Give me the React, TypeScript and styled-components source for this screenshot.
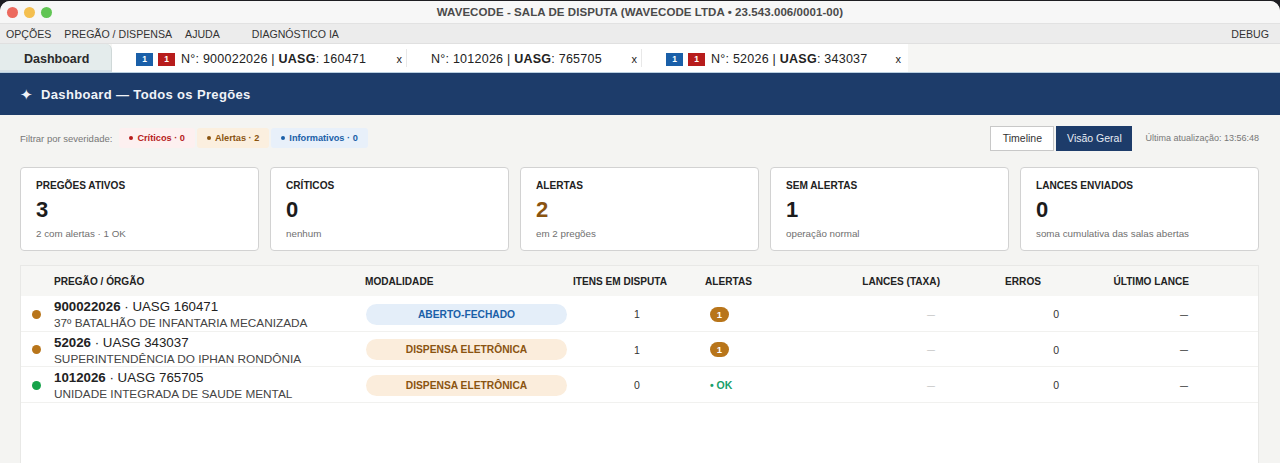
import React from "react";
import styled, { createGlobalStyle } from "styled-components";

const GlobalStyle = createGlobalStyle`
	* {
		box-sizing: border-box;
	}
	html, body {
		margin: 0;
		padding: 0;
		height: 463px;
		overflow: hidden;
		background: #1e1e22;
		font-family: "Liberation Sans", Arial, sans-serif;
	}
`;

const cards = [
	{ title: "PREGÕES ATIVOS", value: "3", note: "2 com alertas · 1 OK" },
	{ title: "CRÍTICOS", value: "0", note: "nenhum" },
	{ title: "ALERTAS", value: "2", note: "em 2 pregões", warn: true },
	{ title: "SEM ALERTAS", value: "1", note: "operação normal" },
	{ title: "LANCES ENVIADOS", value: "0", note: "soma cumulativa das salas abertas" },
];

const rows = [
	{ id: "900022026", uasg: "160471", org: "37º BATALHÃO DE INFANTARIA MECANIZADA", mod: "ABERTO-FECHADO", blue: true, itens: "1", alert: true },
	{ id: "52026", uasg: "343037", org: "SUPERINTENDÊNCIA DO IPHAN RONDÔNIA", mod: "DISPENSA ELETRÔNICA", itens: "1", alert: true },
	{ id: "1012026", uasg: "765705", org: "UNIDADE INTEGRADA DE SAUDE MENTAL", mod: "DISPENSA ELETRÔNICA", itens: "0", alert: false },
];

const App = () => {
	return (
		<Window>
			<GlobalStyle />
			<TitleBar>
				<Lights>
					<Light $color="#ec6a5e" />
					<Light $color="#f4bf4f" />
					<Light $color="#61c554" />
				</Lights>
				WAVECODE - SALA DE DISPUTA (WAVECODE LTDA • 23.543.006/0001-00)
			</TitleBar>
			<MenuBar>
				<MenuItem>OPÇÕES</MenuItem>
				<MenuItem>PREGÃO / DISPENSA</MenuItem>
				<MenuItem>AJUDA</MenuItem>
				<MenuItem $gap={19}>DIAGNÓSTICO IA</MenuItem>
				<MenuItem $right>DEBUG</MenuItem>
			</MenuBar>
			<TabBar>
				<DashTab>Dashboard</DashTab>
				<Tab $width={295}>
					<Flag $color="#1a5fa8">1</Flag>
					<Flag $color="#b71c1c">1</Flag>
					<TabText>N°: 900022026 | <b>UASG</b>: 160471</TabText>
					<Close>x</Close>
				</Tab>
				<Tab $width={235}>
					<TabText>N°: 1012026 | <b>UASG</b>: 765705</TabText>
					<Close>x</Close>
				</Tab>
				<Tab $width={266} $last>
					<Flag $color="#1a5fa8">1</Flag>
					<Flag $color="#b71c1c">1</Flag>
					<TabText>N°: 52026 | <b>UASG</b>: 343037</TabText>
					<Close $last>x</Close>
				</Tab>
			</TabBar>
			<Banner>
				<span>✦</span>
				Dashboard — Todos os Pregões
			</Banner>
			<Content>
				<FilterRow>
					<FilterLabel>Filtrar por severidade:</FilterLabel>
					<Chip $bg="#fdf0f0" $color="#b71c1c">Críticos · 0</Chip>
					<Chip $bg="#fbefdf" $color="#8a5410">Alertas · 2</Chip>
					<Chip $bg="#e8f0fa" $color="#1a5fa8">Informativos · 0</Chip>
					<Spacer />
					<ViewButton>Timeline</ViewButton>
					<ViewButton $active>Visão Geral</ViewButton>
					<Updated>Última atualização: 13:56:48</Updated>
				</FilterRow>
				<Cards>
					{cards.map((c) => (
						<Card key={c.title}>
							<CardTitle>{c.title}</CardTitle>
							<CardValue $warn={c.warn}>{c.value}</CardValue>
							<CardNote>{c.note}</CardNote>
						</Card>
					))}
				</Cards>
				<Table>
					<HeadRow>
						<span />
						<HeadCell>PREGÃO / ÓRGÃO</HeadCell>
						<HeadCell>MODALIDADE</HeadCell>
						<HeadCell>ITENS EM DISPUTA</HeadCell>
						<HeadCell>ALERTAS</HeadCell>
						<HeadCell $right>LANCES (TAXA)</HeadCell>
						<HeadCell $right $pad={19}>ERROS</HeadCell>
						<HeadCell $right $pad={69}>ÚLTIMO LANCE</HeadCell>
					</HeadRow>
					{rows.map((r) => (
						<Row key={r.id}>
							<DotCell>
								<Dot $color={r.alert ? "#b8751a" : "#16a34a"} />
							</DotCell>
							<Name>
								<NameTop><b>{r.id}</b> · UASG {r.uasg}</NameTop>
								<Org>{r.org}</Org>
							</Name>
							<PillCell>
								<Pill $blue={r.blue}>{r.mod}</Pill>
							</PillCell>
							<Itens>{r.itens}</Itens>
							<AlertCell>
								{r.alert ? <AlertBadge>1</AlertBadge> : <OkLabel>• OK</OkLabel>}
							</AlertCell>
							<Rate>—</Rate>
							<Errors>0</Errors>
							<LastBid>—</LastBid>
						</Row>
					))}
				</Table>
			</Content>
		</Window>
	);
};

export default App;

const columns = "33px 311px 208px 132px 100px 135px 120px 1fr";

const Window = styled.div`
	width: 1280px;
	height: 462px;
	margin-top: 1px;
	border-radius: 10px 10px 0 0;
	overflow: hidden;
	background: #f4f4f2;
	display: flex;
	flex-direction: column;
`;

const TitleBar = styled.div`
	position: relative;
	height: 23px;
	flex: none;
	background: #f7f7f7;
	border-bottom: 1px solid #e2e2e2;
	display: flex;
	align-items: center;
	justify-content: center;
	font-size: 11.5px;
	font-weight: bold;
	letter-spacing: 0.07px;
	color: #4a4a4a;
`;

const Lights = styled.div`
	position: absolute;
	left: 7px;
	top: 6px;
	display: flex;
	gap: 6px;
`;

const Light = styled.i<{ $color: string }>`
	width: 11px;
	height: 11px;
	border-radius: 50%;
	background: ${(p) => p.$color};
`;

const MenuBar = styled.div`
	height: 20px;
	flex: none;
	padding: 0 11px 0 6px;
	background: #ececec;
	border-bottom: 1px solid #e0e0e0;
	display: flex;
	align-items: center;
	gap: 13px;
	font-size: 10.6px;
	color: #333;
`;

const MenuItem = styled.div<{ $gap?: number; $right?: boolean }>`
	margin-left: ${(p) => (p.$right ? "auto" : `${p.$gap ?? 0}px`)};
`;

const TabBar = styled.div`
	height: 28px;
	flex: none;
	background: #f6f6f4;
	display: flex;
	align-items: stretch;
`;

const DashTab = styled.div`
	width: 112px;
	border-right: 1px solid #cfd8d8;
	border-radius: 0 6px 0 0;
	background: #e4ecec;
	display: flex;
	align-items: center;
	padding: 3px 0 0 24px;
	font-size: 12.5px;
	font-weight: bold;
	color: #2a2a2a;
	border-bottom: 2px solid #d5e0e6;
`;

const Tab = styled.div<{ $width: number; $last?: boolean }>`
	width: ${(p) => p.$width}px;
	padding: 2px 0 0 24px;
	background: #fff;
	display: flex;
	align-items: center;
	position: relative;
	&::after {
		content: "";
		display: ${(p) => (p.$last ? "none" : "block")};
		position: absolute;
		right: 0;
		top: 5px;
		bottom: 5px;
		width: 1px;
		background: #e8e8e8;
	}
`;

const Flag = styled.span<{ $color: string }>`
	width: 17px;
	height: 13px;
	margin-right: 5px;
	background: ${(p) => p.$color};
	color: #fff;
	font-size: 8.5px;
	font-weight: bold;
	display: flex;
	align-items: center;
	justify-content: center;
`;

const TabText = styled.span`
	font-size: 12.5px;
	letter-spacing: 0.24px;
	color: #222;
	white-space: nowrap;
	${Flag} + & {
		margin-left: 1px;
	}
	b {
		font-weight: bold;
	}
`;

const Close = styled.span<{ $last?: boolean }>`
	position: absolute;
	right: ${(p) => (p.$last ? "7px" : "5px")};
	font-size: 11px;
	color: #222;
`;

const Banner = styled.div`
	height: 43px;
	flex: none;
	background: #1d3c6a;
	border-top: 1px solid #b9cfe0;
	display: flex;
	align-items: center;
	padding-left: 20px;
	gap: 8px;
	font-size: 13px;
	font-weight: bold;
	letter-spacing: 0.35px;
	color: #f0f3f8;
	span {
		width: 13px;
		font-size: 15px;
		line-height: 15px;
		font-weight: normal;
	}
`;

const Content = styled.div`
	flex: 1;
	padding: 0 21px 0 20px;
	display: flex;
	flex-direction: column;
	min-height: 0;
`;

const FilterRow = styled.div`
	height: 46px;
	flex: none;
	display: flex;
	align-items: center;
`;

const FilterLabel = styled.span`
	font-size: 9.5px;
	color: #777;
	margin-right: 7px;
`;

const Chip = styled.span<{ $bg: string; $color: string }>`
	height: 20px;
	padding: 0 10px;
	margin-right: 2px;
	border-radius: 3px;
	background: ${(p) => p.$bg};
	color: ${(p) => p.$color};
	font-size: 9.2px;
	font-weight: bold;
	display: flex;
	align-items: center;
	gap: 4px;
	&::before {
		content: "";
		width: 4px;
		height: 4px;
		border-radius: 50%;
		background: currentColor;
	}
`;

const Spacer = styled.div`
	flex: 1;
`;

const ViewButton = styled.button<{ $active?: boolean }>`
	width: ${(p) => (p.$active ? "76px" : "64px")};
	height: 25px;
	margin: 0 0 0 ${(p) => (p.$active ? "2px" : "0")};
	padding: 0;
	border: 1px solid ${(p) => (p.$active ? "#1d3c6a" : "#c8c8c8")};
	background: ${(p) => (p.$active ? "#1d3c6a" : "#fff")};
	color: ${(p) => (p.$active ? "#e8edf4" : "#333")};
	font-family: inherit;
	font-size: 10.5px;
`;

const Updated = styled.span`
	font-size: 9px;
	color: #777;
	margin-left: 13px;
`;

const Cards = styled.div`
	display: grid;
	grid-template-columns: repeat(5, 1fr);
	gap: 11px;
	flex: none;
	margin-top: 6px;
`;

const Card = styled.div`
	height: 84px;
	background: #fff;
	border: 1px solid #d2d2d2;
	border-radius: 4px;
	padding: 12px 15px 0;
`;

const CardTitle = styled.div`
	font-size: 10.1px;
	font-weight: bold;
	color: #222;
	line-height: 12px;
`;

const CardValue = styled.div<{ $warn?: boolean }>`
	font-size: 22px;
	font-weight: bold;
	line-height: 24px;
	margin-top: 6px;
	color: ${(p) => (p.$warn ? "#8a5410" : "#1c1c1c")};
`;

const CardNote = styled.div`
	font-size: 9.8px;
	line-height: 12px;
	margin-top: 6px;
	color: #6f6f6f;
`;

const Table = styled.div`
	flex: 1;
	margin-top: 14px;
	background: #fff;
	border: 1px solid #e8e8e6;
	border-bottom: none;
`;

const HeadRow = styled.div`
	height: 30px;
	padding-top: 1px;
	background: #f6f6f4;
	display: grid;
	grid-template-columns: ${columns};
	align-items: center;
`;

const HeadCell = styled.div<{ $right?: boolean; $pad?: number }>`
	font-size: 10.1px;
	font-weight: bold;
	color: #222;
	white-space: nowrap;
	text-align: ${(p) => (p.$right ? "right" : "left")};
	padding-right: ${(p) => p.$pad ?? 0}px;
`;

const Row = styled.div`
	height: 35.5px;
	padding-top: 1px;
	display: grid;
	grid-template-columns: ${columns};
	align-items: center;
	border-bottom: 1.5px solid #f1f1ef;
`;

const DotCell = styled.div`
	display: flex;
	padding-left: 11px;
`;

const Dot = styled.i<{ $color: string }>`
	width: 9px;
	height: 9px;
	border-radius: 50%;
	background: ${(p) => p.$color};
`;

const Name = styled.div`
	white-space: nowrap;
	padding-top: 2px;
`;

const NameTop = styled.div`
	font-size: 13.3px;
	line-height: 16px;
	color: #222;
`;

const Org = styled.div`
	font-size: 11.8px;
	line-height: 16px;
	color: #444;
`;

const PillCell = styled.div`
	display: flex;
`;

const Pill = styled.div<{ $blue?: boolean }>`
	width: 201px;
	height: 21px;
	margin-left: 1px;
	border-radius: 11px;
	background: ${(p) => (p.$blue ? "#e4eef9" : "#fbeddc")};
	color: ${(p) => (p.$blue ? "#1a5fa8" : "#8a5410")};
	font-size: 10.25px;
	font-weight: bold;
	display: flex;
	align-items: center;
	justify-content: center;
`;

const Itens = styled.div`
	font-size: 10.5px;
	color: #333;
	padding-left: 61px;
`;

const AlertCell = styled.div`
	display: flex;
	padding-left: 5px;
`;

const AlertBadge = styled.span`
	width: 19px;
	height: 15px;
	border-radius: 8px;
	background: #b8751a;
	color: #fff;
	font-size: 9.5px;
	font-weight: bold;
	display: flex;
	align-items: center;
	justify-content: center;
`;

const OkLabel = styled.span`
	font-size: 10.5px;
	font-weight: bold;
	color: #18a06a;
`;

const Rate = styled.div`
	font-size: 8px;
	color: #aaa;
	text-align: right;
	padding-right: 5px;
`;

const Errors = styled.div`
	font-size: 10.5px;
	color: #333;
	text-align: right;
	padding-right: 1px;
`;

const LastBid = styled.div`
	font-size: 8px;
	font-weight: bold;
	color: #333;
	text-align: right;
	padding-right: 70px;
`;
